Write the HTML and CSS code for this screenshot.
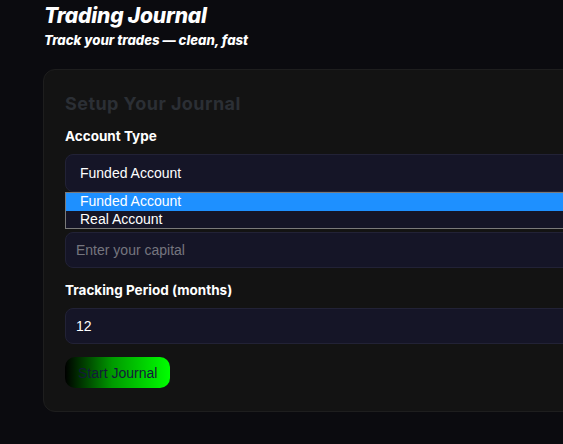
FILE: index.html
```html
<!DOCTYPE html>
<html lang="en">
<head>
<meta charset="utf-8">
<title>Trading Journal</title>
<link rel="stylesheet" href="styles.css">
</head>
<body>
<div class="page">
  <header class="header">
    <h1 class="title">Trading Journal</h1>
    <p class="subtitle">Track your trades — clean, fast</p>
  </header>
  <section class="card">
    <h2 class="card-title">Setup Your Journal</h2>
    <div class="field">
      <label class="label">Account Type</label>
      <div class="select-wrap">
        <div class="control">Funded Account</div>
        <ul class="dropdown">
          <li class="option active">Funded Account</li>
          <li class="option">Real Account</li>
        </ul>
      </div>
    </div>
    <div class="field field-tight">
      <div class="label-spacer"></div>
      <div class="control input placeholder">Enter your capital</div>
    </div>
    <div class="field">
      <label class="label">Tracking Period (months)</label>
      <div class="control input">12</div>
    </div>
    <button class="btn">Start Journal</button>
  </section>
</div>
</body>
</html>
```
FILE: styles.css
```css
html, body {
  margin: 0;
  padding: 0;
  background: #0b0b0f;
  overflow: hidden;
  width: 563px;
  height: 444px;
}
.page {
  padding: 3px 0 0 43px;
  width: 640px;
}
.header {
  padding-left: 1px;
}
.title {
  margin: 0;
  font-family: "Inter", sans-serif;
  font-weight: 800;
  font-style: italic;
  font-size: 21px;
  line-height: 26px;
  color: #ffffff;
  letter-spacing: -0.2px;
}
.subtitle {
  margin: 3px 0 0 0;
  font-family: "Inter", sans-serif;
  font-weight: 800;
  font-style: italic;
  font-size: 13.2px;
  line-height: 16px;
  color: #ffffff;
}
.card {
  margin-top: 21px;
  background: #131313;
  border: 1px solid #1e1e1e;
  border-radius: 12px;
  padding: 22px 21px 23px 21px;
  width: 600px;
  box-sizing: border-box;
}
.card-title {
  margin: 0 0 11px 0;
  font-family: "Inter", sans-serif;
  font-weight: 700;
  font-size: 18px;
  line-height: 24px;
  letter-spacing: 0.45px;
  color: #2b2f35;
}
.field {
  display: flex;
  flex-direction: column;
  margin-bottom: 16px;
}
.field-tight {
  margin-bottom: 13px;
}
.label {
  font-family: "Inter", sans-serif;
  font-weight: 700;
  font-size: 13.5px;
  line-height: 18px;
  color: #ffffff;
  margin-bottom: 9px;
}
.label-spacer {
  height: 18px;
  margin-bottom: 6px;
}
.select-wrap {
  position: relative;
}
.control {
  box-sizing: border-box;
  height: 38px;
  background: #151527;
  border: 1px solid #222236;
  border-radius: 8px;
  padding: 0 14px;
  display: flex;
  align-items: center;
  font-family: "Liberation Sans", Arial, sans-serif;
  font-size: 14px;
  color: #ffffff;
}
.control.input {
  height: 36px;
  padding: 0 10px;
}
.placeholder {
  color: #75757f;
}
.dropdown {
  position: absolute;
  left: 0;
  top: 38px;
  width: 100%;
  margin: 0;
  padding: 0;
  list-style: none;
  background: #151527;
  border: 1px solid #7a7a7a;
  box-sizing: border-box;
  z-index: 5;
}
.option {
  font-family: "Liberation Sans", Arial, sans-serif;
  font-size: 14px;
  line-height: 17.5px;
  height: 17.5px;
  color: #ffffff;
  padding-left: 14px;
}
.option.active {
  background: #1e90ff;
}
.btn {
  margin-top: -3px;
  height: 31px;
  padding: 0 13px;
  border: none;
  border-radius: 10px;
  background: linear-gradient(90deg, #000000 0%, #009a00 45%, #00ff00 100%);
  font-family: "Liberation Sans", Arial, sans-serif;
  font-size: 14px;
  color: #141a3a;
  cursor: pointer;
}
```
